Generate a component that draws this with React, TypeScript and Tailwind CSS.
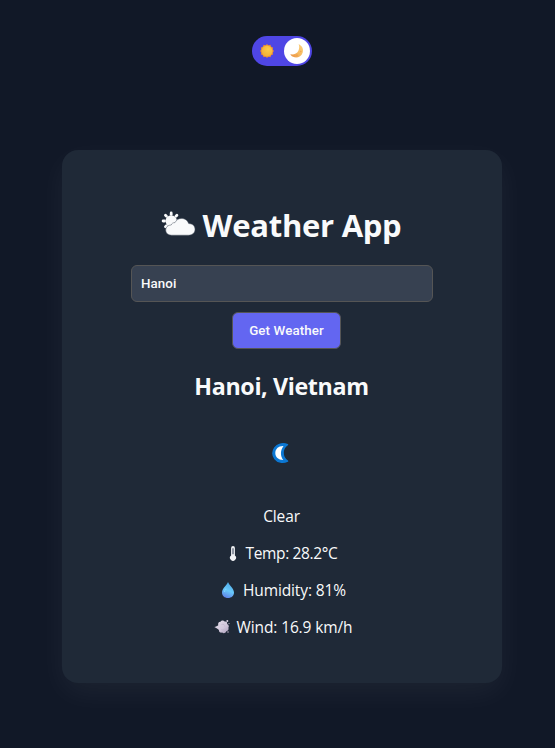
import type { ReactNode } from 'react';

function SunIcon() {
  return (
    <svg width="16" height="16" viewBox="0 0 16 16">
      <g fill="#e8873a">
        {[0, 30, 60, 90, 120, 150, 180, 210, 240, 270, 300, 330].map((a) => (
          <path key={a} d="M6.2 2.8 8 .9l1.800 1.900z" transform={`rotate(${a} 8 8)`} />
        ))}
      </g>
      <circle cx="8" cy="8" r="6" fill="#ee9a32" />
      <circle cx="8" cy="8" r="5.3" fill="url(#sun)" />
      <defs>
        <radialGradient id="sun" cx=".6" cy=".35" r=".7">
          <stop stopColor="#fdcc48" />
          <stop offset="1" stopColor="#f3ae38" />
        </radialGradient>
      </defs>
    </svg>
  );
}

function MoonIcon() {
  return (
    <svg width="16" height="16" viewBox="0 0 16 16">
      <defs>
        <linearGradient id="moon" x1="0" y1="1" x2="1" y2="0">
          <stop stopColor="#e88b3e" />
          <stop offset=".45" stopColor="#f7b95f" />
          <stop offset="1" stopColor="#fbd07c" />
        </linearGradient>
      </defs>
      <path d="M9.600 1.300c3.500 1.400 5.200 4.700 4.100 8.100-1.100 3.700-4.700 5.500-8.200 4.900-2-.4-3.500-1.500-4.200-3 3.400.5 6.700-.5 8-3.300 1.100-2.200 1.300-4.600.3-6.700z" fill="url(#moon)" />
      <circle cx="11.800" cy="8.500" r=".7" fill="#eda24e" />
      <circle cx="8" cy="12.200" r=".7" fill="#e99a4c" />
    </svg>
  );
}

function CloudSunIcon() {
  return (
    <svg width="36" height="26" viewBox="0 0 36 26">
      <g stroke="#f9fafb" strokeWidth="2.800" strokeLinecap="round">
        {[0, 45, 90, 180, 225, 270, 315].map((a) => (
          <path key={a} d="M10.200 1.900v1.400" transform={`rotate(${a} 10.200 10)`} />
        ))}
      </g>
      <circle cx="10.200" cy="10" r="5.700" fill="#f9fafb" />
      <path d="M10.500 24.200C7 24.200 4.700 22 4.700 19c0-3 2.400-5.100 5.500-5 .5-1.600 2-2.500 3.800-2.400 1.300-2.700 3.800-4.200 6.600-4.200 3.700 0 6.200 2.300 7.100 5.200 3.800.1 6.300 2.300 6.300 5.700 0 3.500-2.700 5.900-6.500 5.900z" fill="#f9fafb" stroke="#4b5563" strokeWidth=".5" />
    </svg>
  );
}

function CrescentIcon() {
  return (
    <svg width="18" height="20" viewBox="0 0 18 20">
      <path d="M15.500 1.700C10.500-.3 5.300 1.200 2.700 5c-2.300 3.400-2.200 7.600.2 10.800 2.800 3.600 8 4.500 12.700 2.300-3-1.800-4.500-4.700-4.500-8.100 0-3.500 1.600-6.600 4.400-8.300z" fill="#0c78d4" stroke="#0c78d4" strokeWidth="1.400" strokeLinejoin="round" />
      <path d="M11.500 3C6.400 2.800 3.300 6.100 3.300 10.100c0 3.800 3 7 8 7-3.200-4.300-3.100-9.800.2-14.100z" fill="#fff" />
    </svg>
  );
}

function ThermometerIcon() {
  return (
    <svg width="8" height="16" viewBox="0 0 8 16">
      <path d="M2.100 3a1.900 1.900 0 0 1 3.800 0v7.400a3 3 0 1 1-3.800 0z" fill="#f1f2f5" />
      <path d="M4 3.200v6" stroke="#596274" strokeWidth="1.300" />
    </svg>
  );
}

function DropIcon() {
  return (
    <svg width="14" height="18" viewBox="0 0 14 18">
      <defs>
        <linearGradient id="drop" x1=".7" y1="0" x2=".4" y2="1">
          <stop stopColor="#4ca8e6" />
          <stop offset=".55" stopColor="#68c8fa" />
          <stop offset="1" stopColor="#5f83e8" />
        </linearGradient>
      </defs>
      <path d="M7 1c.7 2.500 6 6.600 6 10.500 0 3.400-2.600 5.500-6 5.500s-6-2.100-6-5.500C1 7.600 6.300 3.500 7 1z" fill="url(#drop)" />
      <path d="M3.500 10.500c.3-1 .8-1.700 1.400-2.400" stroke="#7dd6ff" strokeWidth="1.200" strokeLinecap="round" />
    </svg>
  );
}

function WindIcon() {
  return (
    <svg width="16" height="16" viewBox="0 0 16 16">
      <defs>
        <linearGradient id="wind" x1="0" y1="0" x2="1" y2="1">
          <stop stopColor="#e4dfe9" />
          <stop offset=".6" stopColor="#d2c8dc" />
          <stop offset="1" stopColor="#a89bb8" />
        </linearGradient>
      </defs>
      <path d="M.3 7.900c1.600-.2 3.100-.8 4-1.700-.7-2 .5-3.600 2.200-3.500.9-1.600 3.200-1.600 4.100-.2 1.900-.3 3 1 2.500 2.500 1.800.8 2.200 2.500 1.300 3.800.7 1.800-.4 3.300-2 3.400-.7 1.800-2.700 2.500-4.200 1.400-1.800.6-3.500-.7-3.300-2.500-.9-1.300-2.600-2.300-4.600-3.200z" fill="url(#wind)" />
      <circle cx="13.300" cy="2.100" r="1" fill="#d8d0df" />
      <circle cx="15" cy="4.600" r=".6" fill="#c9bfd2" />
      <circle cx="14" cy="13" r=".8" fill="#b8acc5" />
      <path d="M7.500 5.500c1.700-.8 3.600.4 3.300 2.100M7.300 10.500c1.300.8 2.700.4 3.300-.7" fill="none" stroke="#c0b5cc" strokeWidth=".7" />
    </svg>
  );
}

function Row({ icon, children }: { icon?: ReactNode; children: ReactNode }) {
  return (
    <p className="flex h-[37px] items-center justify-center whitespace-nowrap">
      {icon}
      {children}
    </p>
  );
}

export default function App() {
  return (
    <main className="flex h-[748px] w-full flex-col items-center overflow-hidden bg-[#111827] pl-[9px] pt-9 font-['Open_Sans','Noto_Sans',sans-serif] text-[#f9fafb]">
      <button aria-label="Toggle theme" className="flex h-[30px] w-[60px] shrink-0 items-center justify-between rounded-full bg-[#4f46e5] pl-[7px] pr-0.5">
        <SunIcon />
        <span className="flex size-[26px] items-center justify-center rounded-full bg-white">
          <MoonIcon />
        </span>
      </button>

      <section className="mt-[84px] flex h-[533px] w-[440px] shrink-0 flex-col items-center rounded-2xl bg-[#1f2937] pt-[54px] shadow-[0_10px_30px_rgba(255,255,255,0.05)]">
        <h1 className="mr-0.5 flex h-[43px] items-center whitespace-nowrap text-[31px] font-bold">
          <span className="mb-1 mr-1.5"><CloudSunIcon /></span>
          <span className="tracking-[-0.27px]">Weather App</span>
        </h1>
        <input
          defaultValue="Hanoi"
          className="mt-[18px] h-[37px] w-[302px] rounded-md border border-[#555] bg-[#374151] px-[9px] font-['Roboto',sans-serif] text-[13.333px] font-medium tracking-[0.1px] text-[#f9fafb] outline-none"
        />
        <button className="ml-[9px] mt-[10px] h-[37px] w-[109px] whitespace-nowrap rounded-md border border-[#555] bg-[#6366f1] font-['Roboto',sans-serif] text-[13.333px] font-medium tracking-[0.1px] text-[#f9fafb]">
          Get Weather
        </button>
        <h2 className="mr-px mt-[21px] flex h-8 items-center whitespace-nowrap text-[23.25px] font-bold tracking-[-0.37px]">Hanoi, Vietnam</h2>
        <div className="mr-[3px] mt-[41px] flex h-5 items-center"><CrescentIcon /></div>
        <div className="mr-px mt-[35px] text-[15.5px] tracking-[-0.12px]">
          <Row>Clear</Row>
          <Row icon={<span className="mb-0.5 mr-1 flex w-4 justify-center"><ThermometerIcon /></span>}>
            <span className="tracking-[-0.35px]">Temp: 28.2°C</span>
          </Row>
          <Row icon={<span className="mb-0.5 mr-1 flex w-[22px] justify-center"><DropIcon /></span>}>Humidity: 81%</Row>
          <Row icon={<span className="mb-0.5 mr-1 flex w-[22px] justify-center"><WindIcon /></span>}>Wind: 16.9 km/h</Row>
        </div>
      </section>
    </main>
  );
}
